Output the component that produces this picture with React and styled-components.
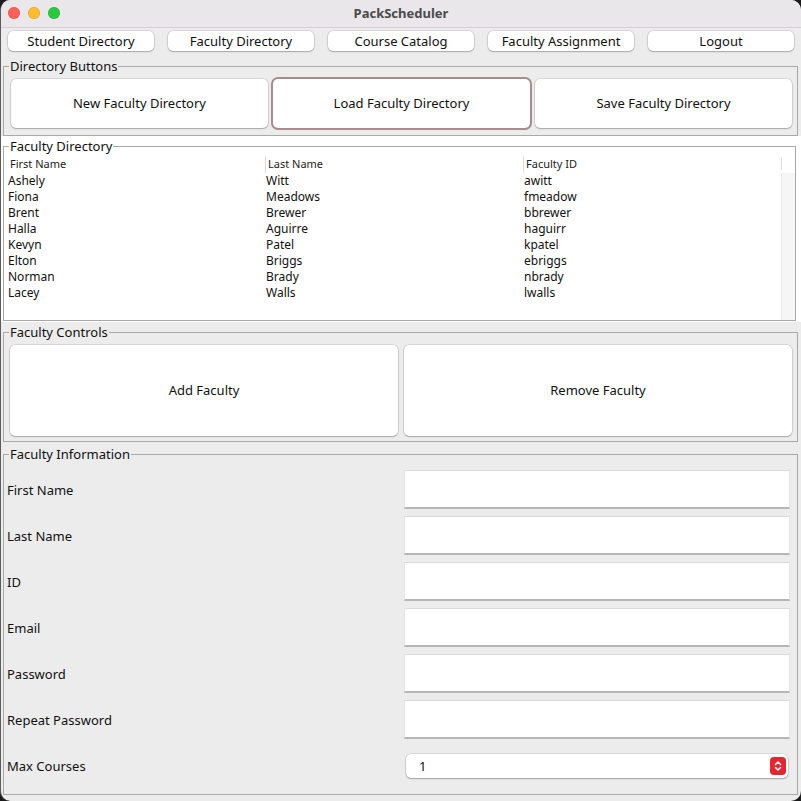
import React from "react";
import styled, { createGlobalStyle } from "styled-components";

const Global = createGlobalStyle`
  html, body { margin: 0; padding: 0; background: #1b1b1b; }
  body { font-family: "Noto Sans", "Liberation Sans", sans-serif; }
  * { box-sizing: border-box; }
`;

const Window = styled.div`
  width: 801px;
  height: 801px;
  background: #ececec;
  border-radius: 10px;
  overflow: hidden;
  border-left: 1px solid #5c5c5c;
  display: flex;
  flex-direction: column;
  color: #111;
  font-size: 13px;
`;

const TitleBar = styled.div`
  height: 28px;
  flex: none;
  background: #e9e7e9;
  border-bottom: 1px solid #d2d2d2;
  display: flex;
  align-items: center;
  position: relative;
  justify-content: center;
`;

const Lights = styled.div`
  position: absolute;
  left: 7px;
  top: 7px;
  display: flex;
  gap: 8px;
`;

const Light = styled.span`
  width: 12px;
  height: 12px;
  border-radius: 50%;
  background: ${(p) => p.$c};
  box-shadow: inset 0 0 0 0.5px rgba(0, 0, 0, 0.15);
`;

const Title = styled.div`
  font-weight: 700;
  font-size: 13px;
  color: #4b4b4b;
  margin-top: -1px;
`;

const Content = styled.div`
  padding: 0 3px 0 2px;
  display: flex;
  flex-direction: column;
`;

const NavBar = styled.div`
  display: flex;
  gap: 14px;
  padding: 3px 0 0 5px;
`;

const Button = styled.button`
  font-family: inherit;
  font-size: 13px;
  color: #111;
  background: #fff;
  border: none;
  border-radius: 5px;
  box-shadow: 0 0 0 0.5px rgba(0, 0, 0, 0.18), 0 1px 1.5px rgba(0, 0, 0, 0.22);
  padding: 0;
  display: flex;
  align-items: center;
  justify-content: center;
  ${(p) =>
    p.$focused &&
    `box-shadow: 0 0 0 2px #a68b90, 0 1px 1.5px rgba(0,0,0,0.22);`}
`;

const NavButton = styled(Button)`
  width: 146px;
  height: 20px;
`;

const Group = styled.fieldset`
  margin: ${(p) => p.$mt || 0}px 0 0 0;
  padding: 0;
  border: 1px solid #a9a9a9;
  min-width: 0;
`;

const Legend = styled.legend`
  margin-left: 5px;
  padding: 0 1px;
  font-size: 13px;
  line-height: 16px;
  color: #111;
`;

const ButtonRow = styled.div`
  display: grid;
  grid-template-columns: 1fr 1fr 1fr;
  gap: 5px;
  padding: 5px 5px 7px 7px;
`;

const BigButton = styled(Button)`
  height: ${(p) => p.$h}px;
  padding-bottom: 2px;
`;

const WhiteBand = styled.div`
  background: #fff;
  padding: 2px 5px 1px 2px;
`;

const Table = styled.div`
  padding: 2px 0 0 3px;
  display: grid;
  grid-template-columns: 258px 258px 258px 1fr;
  grid-template-rows: 17px 147px;
`;

const HeadCell = styled.div`
  font-size: 11px;
  line-height: 12px;
  height: 17px;
  padding: 2px 0 0 2px;
  display: flex;
  align-items: flex-start;
  border-left: 1px solid ${(p) => (p.$first ? "transparent" : "#dcdcdc")};
  background-clip: content-box;
  color: #222;
`;

const HeadSep = styled.div`
  margin-top: 2px;
  height: 12px;
  border-left: 1px solid #dcdcdc;
`;

const Column = styled.div`
  display: flex;
  flex-direction: column;
  padding-left: 1px;
`;

const Cell = styled.div`
  height: 16px;
  line-height: 16px;
  font-size: 12px;
  color: #111;
  white-space: nowrap;
`;

const ScrollTrack = styled.div`
  background: #f6f6f6;
  border-left: 1px solid #ebebeb;
`;

const ControlRow = styled.div`
  display: grid;
  grid-template-columns: 1fr 1fr;
  gap: 6px;
  padding: 5px 5px 5px 6px;
`;

const Form = styled.div`
  display: grid;
  grid-template-columns: 1fr 386px;
  grid-auto-rows: 39px;
  row-gap: 7px;
  padding: 8px 7px 9px 3px;
`;

const Label = styled.div`
  display: flex;
  align-items: center;
  font-size: 13px;
  color: #111;
`;

const TextField = styled.div`
  background: #fff;
  border-top: 1px solid #dadada;
  border-left: 1px solid #e4e4e4;
  border-right: 1px solid #e4e4e4;
  border-bottom: 2px solid #b6b6b6;
`;

const ComboWrap = styled.div`
  display: flex;
  align-items: center;
  padding: 0 2px;
`;

const Combo = styled.div`
  flex: 1;
  height: 24px;
  background: #fff;
  border-radius: 5px;
  box-shadow: 0 0 0 0.5px rgba(0, 0, 0, 0.16), 0 1px 1.5px rgba(0, 0, 0, 0.25);
  display: flex;
  align-items: center;
  justify-content: space-between;
  padding: 0 2px 0 13px;
  font-size: 13px;
`;

const Stepper = styled.div`
  width: 16px;
  height: 18px;
  border-radius: 4px;
  background: #e3262f;
  display: flex;
  align-items: center;
  justify-content: center;
`;

const faculty = [
  ["Ashely", "Witt", "awitt"],
  ["Fiona", "Meadows", "fmeadow"],
  ["Brent", "Brewer", "bbrewer"],
  ["Halla", "Aguirre", "haguirr"],
  ["Kevyn", "Patel", "kpatel"],
  ["Elton", "Briggs", "ebriggs"],
  ["Norman", "Brady", "nbrady"],
  ["Lacey", "Walls", "lwalls"],
];

const fields = ["First Name", "Last Name", "ID", "Email", "Password", "Repeat Password"];

export default function App() {
  return (
    <>
      <Global />
      <Window>
        <TitleBar>
          <Lights>
            <Light $c="#fe5f57" />
            <Light $c="#febc2e" />
            <Light $c="#28c840" />
          </Lights>
          <Title>PackScheduler</Title>
        </TitleBar>
        <Content>
          <NavBar>
            <NavButton>Student Directory</NavButton>
            <NavButton>Faculty Directory</NavButton>
            <NavButton>Course Catalog</NavButton>
            <NavButton>Faculty Assignment</NavButton>
            <NavButton>Logout</NavButton>
          </NavBar>

          <Group $mt={7}>
            <Legend>Directory Buttons</Legend>
            <ButtonRow>
              <BigButton $h={49}>New Faculty Directory</BigButton>
              <BigButton $h={49} $focused>
                Load Faculty Directory
              </BigButton>
              <BigButton $h={49}>Save Faculty Directory</BigButton>
            </ButtonRow>
          </Group>
        </Content>

        <WhiteBand>
          <Group>
            <Legend>Faculty Directory</Legend>
            <Table>
              <HeadCell $first>First Name</HeadCell>
              <HeadCell>Last Name</HeadCell>
              <HeadCell>Faculty ID</HeadCell>
              <HeadSep />
              {[0, 1, 2].map((c) => (
                <Column key={c}>
                  {faculty.map((r) => (
                    <Cell key={r[2]}>{r[c]}</Cell>
                  ))}
                </Column>
              ))}
              <ScrollTrack />
            </Table>
          </Group>
        </WhiteBand>

        <Content>
          <Group $mt={2}>
            <Legend>Faculty Controls</Legend>
            <ControlRow>
              <BigButton $h={91}>Add Faculty</BigButton>
              <BigButton $h={91}>Remove Faculty</BigButton>
            </ControlRow>
          </Group>

          <Group $mt={4}>
            <Legend>Faculty Information</Legend>
            <Form>
              {fields.map((f) => (
                <React.Fragment key={f}>
                  <Label>{f}</Label>
                  <TextField />
                </React.Fragment>
              ))}
              <Label>Max Courses</Label>
              <ComboWrap>
                <Combo>
                  <span>1</span>
                  <Stepper>
                    <svg width="10" height="14" viewBox="0 0 10 14">
                      <path
                        d="M2.5 5.5 L5 3 L7.5 5.5 M2.5 8.5 L5 11 L7.5 8.5"
                        stroke="#fff"
                        strokeWidth="1.5"
                        fill="none"
                        strokeLinecap="round"
                        strokeLinejoin="round"
                      />
                    </svg>
                  </Stepper>
                </Combo>
              </ComboWrap>
            </Form>
          </Group>
        </Content>
      </Window>
    </>
  );
}
